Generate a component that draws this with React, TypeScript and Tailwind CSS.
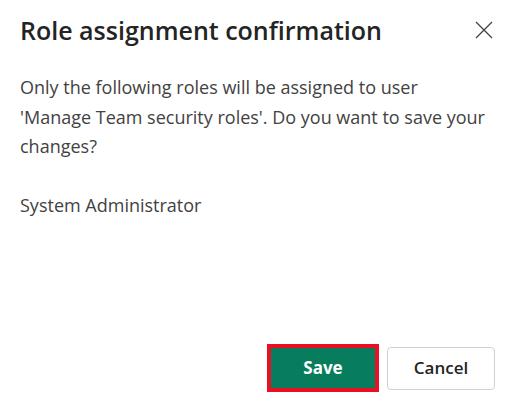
import React from "react";

export default function App() {
  const font = { fontFamily: '"Open Sans", "Noto Sans", sans-serif' };

  return (
    <div className="flex h-[412px] w-[521px] flex-col bg-white text-[#323130]" style={font}>
      <div className="flex items-center justify-between pl-5 pr-[27px] pt-[13px]">
        <h2 className="text-[25px] font-semibold leading-[34px] text-[#242424]">Role assignment confirmation</h2>
        <button className="flex h-[20px] w-[20px] items-center justify-center text-[#424242]" aria-label="Close">
          <svg width="18" height="18" viewBox="0 0 18 18" fill="none" stroke="currentColor" strokeWidth="1.3">
            <path d="M1 1 L17 17 M17 1 L1 17" />
          </svg>
        </button>
      </div>

      <div className="px-5 pt-[26px] text-[18px] leading-[29.5px] text-[#424242]">
        <p>
          Only the following roles will be assigned to user
          <br />
          'Manage Team security roles'. Do you want to save your
          <br />
          changes?
        </p>
        <p className="mt-[29.5px]">System Administrator</p>
      </div>

      <div className="mt-auto flex items-center justify-end gap-2 pb-[20px] pr-[26px]">
        <button className="h-[48px] w-[112px] border-4 border-[#e81123] bg-[#077d5e] text-[17px] font-bold text-white">
          Save
        </button>
        <button className="h-[43px] w-[108px] rounded-[4px] border border-[#d1d1d1] bg-white text-[17px] font-semibold text-[#242424]">
          Cancel
        </button>
      </div>
    </div>
  );
}
